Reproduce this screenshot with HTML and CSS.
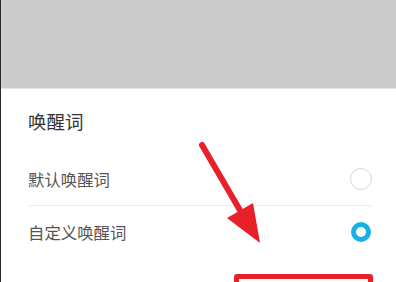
FILE: index.html
```html
<!DOCTYPE html>
<html lang="zh-CN">
<head>
<meta charset="utf-8">
<link rel="stylesheet" href="styles.css">
</head>
<body>
<div class="screen">
  <div class="mask"></div>
  <div class="sheet">
    <div class="title">唤醒词</div>
    <div class="option">
      <span class="label">默认唤醒词</span>
      <span class="radio"></span>
    </div>
    <div class="divider"></div>
    <div class="option">
      <span class="label">自定义唤醒词</span>
      <span class="radio checked"></span>
    </div>
  </div>
  <svg class="arrow" width="396" height="282" viewBox="0 0 396 282">
    <line x1="202" y1="145" x2="241" y2="212" stroke="#e8202a" stroke-width="6" stroke-linecap="round"/>
    <polygon points="227,218 253,203 260,243" fill="#e8202a"/>
  </svg>
  <div class="highlight"></div>
</div>
</body>
</html>
```

FILE: styles.css
```css
html, body {
  margin: 0;
  padding: 0;
  background: #ffffff;
}
.screen {
  position: relative;
  width: 396px;
  height: 282px;
  overflow: hidden;
  border-left: 1px solid #2a2a2a;
  box-sizing: border-box;
  font-family: "Noto Sans CJK SC", "Noto Sans", sans-serif;
}
.mask {
  height: 88px;
  background: #cccccc;
  border-bottom: 1px solid #e4e4e4;
}
.sheet {
  padding: 0 24px 0 27px;
  background: #ffffff;
}
.title {
  padding: 21px 0 21px;
  line-height: 22px;
  font-size: 18.5px;
  color: #333333;
}
.option {
  height: 52px;
  display: flex;
  align-items: center;
  justify-content: space-between;
}
.label {
  font-size: 16.4px;
  color: #555555;
  line-height: 20px;
}
.divider {
  height: 1px;
  background: #ececec;
}
.radio {
  width: 22px;
  height: 22px;
  box-sizing: border-box;
  border-radius: 50%;
  border: 1.5px solid #d6d6d6;
}
.radio.checked {
  width: 20px;
  height: 20px;
  margin-right: 1px;
  border: 5.5px solid #16b2e5;
}
.arrow {
  position: absolute;
  left: -1px;
  top: 0;
}
.highlight {
  position: absolute;
  left: 233px;
  top: 274px;
  width: 139px;
  height: 30px;
  box-sizing: border-box;
  border: 5px solid #e8202a;
  border-radius: 3px;
}
```
